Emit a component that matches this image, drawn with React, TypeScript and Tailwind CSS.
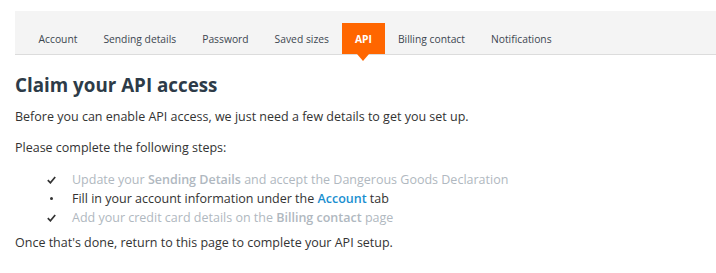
import React from "react";

const tabs = [
  "Account",
  "Sending details",
  "Password",
  "Saved sizes",
  "API",
  "Billing contact",
  "Notifications",
];

const Check = () => (
  <svg width="9" height="8" viewBox="0 0 9 8" className="text-[#333]">
    <path d="M0.8 4.2 L3.4 6.8 L8.2 1" fill="none" stroke="currentColor" strokeWidth="1.7" />
  </svg>
);

export default function App() {
  return (
    <div className="w-[716px] h-[273px] bg-white font-['Open_Sans',sans-serif] text-[#333] pt-[11px]">
      {/* Tab bar */}
      <div className="ml-[15px] bg-[#f4f4f4] border-b border-[#dcdcdc] h-[44px] flex items-end pl-[10.5px]">
        {tabs.map((tab) => {
          const active = tab === "API";
          return (
            <div
              key={tab}
              className={`relative h-[31px] px-[13px] flex items-center text-[10.3px] ${
                active ? "bg-[#ff6600] text-white font-bold" : "text-[#3c4650]"
              }`}
            >
              <span className="pt-[2px]">{tab}</span>
              {active && (
                <span className="absolute left-1/2 -translate-x-1/2 top-full w-0 h-0 border-l-[6px] border-r-[6px] border-t-[7px] border-l-transparent border-r-transparent border-t-[#ff6600]" />
              )}
            </div>
          );
        })}
      </div>

      {/* Content */}
      <div className="px-[15px]">
        <h1 className="mt-[17px] text-[18.8px] font-bold text-[#2d3b48] leading-[26px]">
          Claim your API access
        </h1>
        <p className="mt-[10px] text-[12.5px] leading-[18px]">
          Before you can enable API access, we just need a few details to get you set up.
        </p>
        <p className="mt-[13px] text-[12.5px] leading-[18px]">Please complete the following steps:</p>
        <ul className="mt-[13px] text-[12.5px] leading-[19px]">
          <li className="flex items-center">
            <span className="w-[57px] flex justify-end pr-[16px]">
              <Check />
            </span>
            <span className="text-[#b0b8c0]">
              Update your <b className="font-semibold">Sending Details</b> and accept the Dangerous Goods Declaration
            </span>
          </li>
          <li className="flex items-center">
            <span className="w-[57px] flex justify-end pr-[19px]">
              <span className="w-[3px] h-[3px] rounded-full bg-[#333]" />
            </span>
            <span>
              Fill in your account information under the{" "}
              <b className="font-semibold text-[#1a8fd0]">Account</b> tab
            </span>
          </li>
          <li className="flex items-center">
            <span className="w-[57px] flex justify-end pr-[16px]">
              <Check />
            </span>
            <span className="text-[#b0b8c0]">
              Add your credit card details on the <b className="font-semibold">Billing contact</b> page
            </span>
          </li>
        </ul>
        <p className="mt-[7px] text-[12.5px] leading-[18px]">
          Once that's done, return to this page to complete your API setup.
        </p>
      </div>
    </div>
  );
}
